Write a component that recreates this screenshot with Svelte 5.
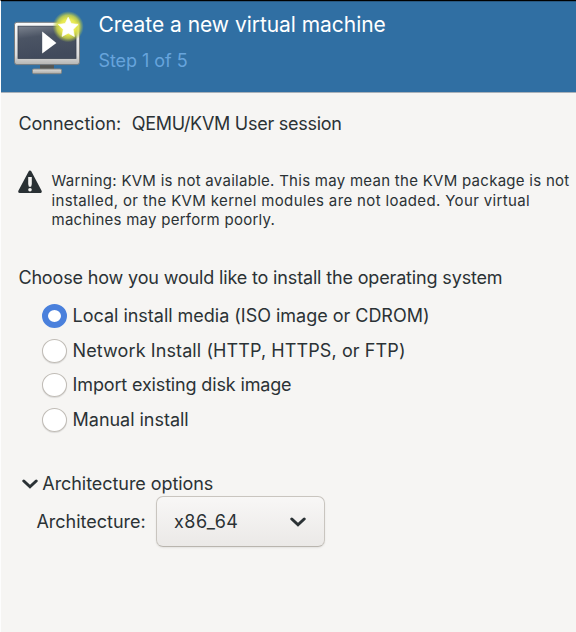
<script>
  const methods = [
    { label: 'Local install media (ISO image or CDROM)', spacing: -0.02 },
    { label: 'Network Install (HTTP, HTTPS, or FTP)', spacing: 0.1 },
    { label: 'Import existing disk image', spacing: -0.15 },
    { label: 'Manual install', spacing: -0.03 }
  ];
  const warning = [
    { text: 'Warning: KVM is not available. This may mean the KVM package is not', spacing: 0.275 },
    { text: 'installed, or the KVM kernel modules are not loaded. Your virtual', spacing: 0.36 },
    { text: 'machines may perform poorly.', spacing: 0.26 }
  ];
  let selected = $state(0);
</script>

<div class="window">
  <header>
    <svg class="logo" width="72" height="66" viewBox="0 0 72 66" aria-hidden="true">
      <defs>
        <linearGradient id="frame" x1="0" y1="0" x2="0" y2="1">
          <stop offset="0" stop-color="#fafafa" /><stop offset=".78" stop-color="#dcdcdc" /><stop offset="1" stop-color="#b4b4b2" />
        </linearGradient>
        <linearGradient id="screen" x1="0" y1="0" x2=".25" y2="1">
          <stop offset="0" stop-color="#7c838f" /><stop offset=".38" stop-color="#4b5464" /><stop offset="1" stop-color="#414a5c" />
        </linearGradient>
        <linearGradient id="foot" x1="0" y1="0" x2="0" y2="1">
          <stop offset="0" stop-color="#deddda" /><stop offset="1" stop-color="#aaa9a5" />
        </linearGradient>
        <radialGradient id="glow">
          <stop offset="0" stop-color="#f4f58c" /><stop offset=".5" stop-color="#e6e84e" /><stop offset=".74" stop-color="#d2da45" stop-opacity=".8" /><stop offset="1" stop-color="#a9c34d" stop-opacity="0" />
        </radialGradient>
      </defs>
      <path d="M27 55h14v6H27z" fill="#555653" />
      <rect x="19.5" y="60" width="29" height="4.7" rx="1.3" fill="url(#foot)" stroke="#858784" />
      <rect x="1.5" y="13.3" width="65" height="42.3" rx="2.5" fill="url(#frame)" stroke="#777c80" />
      <rect x="5" y="17.2" width="58" height="32.2" fill="url(#screen)" stroke="#38404f" stroke-width=".8" />
      <path d="M29.2 22.6v22L43.4 34z" fill="#fff" />
      <circle cx="55.2" cy="17.7" r="15.6" fill="url(#glow)" />
      <path d="m55.2 8.3 3 6.3 6.9.9-5 4.9 1.2 7-6.1-3.3-6.1 3.3 1.2-7-5-4.9 6.9-.9z" fill="#fff" stroke="#fff" stroke-width=".7" stroke-linejoin="round" />
    </svg>
    <div class="titles">
      <h1>Create a new virtual machine</h1>
      <p>Step 1 of 5</p>
    </div>
  </header>

  <main>
    <div class="connection"><span>Connection:</span><span class="value">QEMU/KVM User session</span></div>

    <div class="warning">
      <svg width="26" height="24" viewBox="0 0 26 24" aria-hidden="true">
        <path d="M13 2.2 23.2 21.5H2.8z" fill="#2a3134" stroke="#2a3134" stroke-width="3.2" stroke-linejoin="round" />
        <path d="M11.2 7h3.6v7l-.7 2.7h-2.2l-.7-2.7z" fill="#f6f5f3" />
        <circle cx="13" cy="19.7" r="1.8" fill="#f6f5f3" />
      </svg>
      <div class="lines">
        {#each warning as line}<div style="letter-spacing: {line.spacing}px">{line.text}</div>{/each}
      </div>
    </div>

    <div class="question">Choose how you would like to install the operating system</div>

    <div class="methods">
      {#each methods as method, i}
        <label style="letter-spacing: {method.spacing}px">
          <input type="radio" name="method" value={i} bind:group={selected} />{method.label}
        </label>
      {/each}
    </div>

    <div class="expander">
      <svg width="16" height="10" viewBox="0 0 16 10" aria-hidden="true"><path d="m1.8 2 6.2 5.8L14.2 2" /></svg>
      <span>Architecture options</span>
    </div>
    <div class="arch">
      <span class="arch-label">Architecture:</span>
      <button>
        <span>x86_64</span>
        <svg width="16" height="10" viewBox="0 0 16 10" aria-hidden="true"><path d="m1.8 2 6.2 5.8L14.2 2" /></svg>
      </button>
    </div>
  </main>
</div>

<style>
  :global(body) { background: #f6f5f3; overflow: hidden; }
  .window {
    box-sizing: border-box; width: 576px; height: 632px;
    border-top: 1px solid #000; border-left: 1px solid #fdfdfd;
    background: #f6f5f3; color: #2b3235;
    font: 18px/24px Inter, "Liberation Sans", sans-serif;
    white-space: nowrap; overflow: hidden;
  }
  header {
    box-sizing: border-box; height: 92px; display: flex;
    padding: 8px 0 0 12px; background: #306fa3;
    border-top: 1px solid #28577f; border-bottom: 1px solid #a9b1b9;
  }
  .logo { flex: none; margin-top: -1px; }
  .titles { padding-left: 13.4px; }
  h1 { margin: 1px 0 0; font-size: 21px; font-weight: 400; line-height: 28px; color: #fff; letter-spacing: -.04px; }
  p { margin: 10px 0 0; color: #67a4dc; letter-spacing: -.05px; }
  main { padding: 19px 0 0 17.4px; }
  .connection { display: flex; gap: 10.5px; }
  .value { letter-spacing: -.27px; }
  .warning { display: flex; gap: 8.3px; margin: 35px 0 0 -1.2px; }
  .warning svg { flex: none; margin-top: -1px; }
  .lines { font-size: 15px; line-height: 19.7px; }
  .question { margin-top: 36px; letter-spacing: -.155px; }
  .methods { display: flex; flex-direction: column; gap: 10.6px; margin: 14px 0 0 23.6px; }
  label { display: flex; align-items: center; gap: 5.6px; }
  input {
    appearance: none; box-sizing: border-box; width: 25px; height: 24px; margin: 0;
    border: 1px solid #c0bcb6; border-radius: 50%; background: #fff;
    box-shadow: 0 1px 1px #0000001c;
  }
  input:checked {
    border: 6.5px solid #4a80dc; border-width: 6px 6.5px; box-shadow: none;
  }
  .expander { display: flex; align-items: center; gap: 4.3px; margin: 40px 0 0 3.6px; letter-spacing: -.06px; }
  .expander svg { margin-top: 1px; }
  .expander path, button path { fill: none; stroke: #2b3235; stroke-width: 3; stroke-linecap: round; stroke-linejoin: miter; }
  .arch { display: flex; align-items: center; margin: 0 0 0 18px; }
  .arch-label { width: 119.6px; padding-top: 1px; }
  button {
    box-sizing: border-box; width: 169px; height: 51px; padding: 1px 18px 0 17px;
    display: flex; align-items: center; justify-content: space-between;
    font: inherit; letter-spacing: .5px; color: inherit; border: 1px solid #c9c5bf; border-bottom-color: #b9b5ae; border-radius: 7px;
    background: linear-gradient(#f8f7f6, #ebe9e7); box-shadow: 0 1px 2px #00000014;
  }
  button svg { margin-top: 1px; }
</style>
